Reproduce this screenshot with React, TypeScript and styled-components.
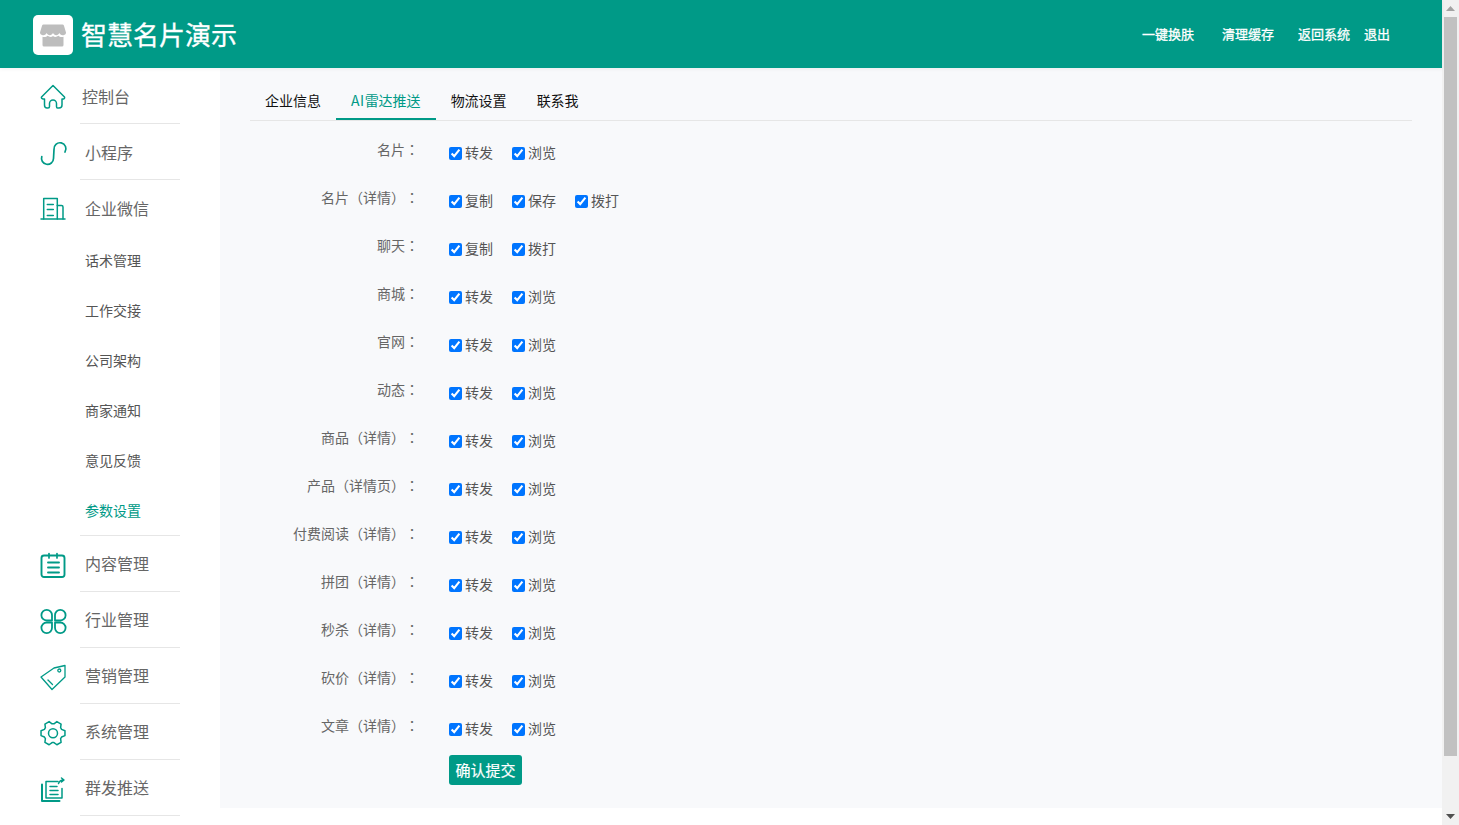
import React from "react";
import styled, { createGlobalStyle } from "styled-components";

const TEAL = "#009a87";

const Global = createGlobalStyle`
  html, body { margin: 0; padding: 0; height: 100%; overflow: hidden; background: #fff; }
  body { font-family: "Noto Sans CJK SC", "Liberation Sans", sans-serif; text-spacing-trim: space-all; }
  * { box-sizing: border-box; }
`;

const Shell = styled.div`
  display: flex;
  width: 1459px;
  height: 825px;
  overflow: hidden;
`;
const Page = styled.div`
  width: 1442px;
  display: flex;
  flex-direction: column;
`;
const Header = styled.header`
  height: 68px;
  flex: none;
  background: ${TEAL};
  display: flex;
  align-items: center;
  padding: 0 52px 0 33px;
  position: relative;
  z-index: 1;
  box-shadow: 0 1px 4px rgba(0, 0, 0, 0.06);
`;
const LogoBox = styled.div`
  width: 40px;
  height: 40px;
  margin-top: 2px;
  background: #fff;
  border-radius: 5px;
  display: flex;
  align-items: center;
  justify-content: center;
`;
const Title = styled.h1`
  margin: 0 0 0 8px;
  font-size: 26px;
  line-height: 40px;
  font-weight: 400;
  color: #fff;
  -webkit-text-stroke: 0.3px #fff;
`;
const HeaderNav = styled.nav`
  margin-left: auto;
  display: flex;
  align-items: center;
  padding-bottom: 2px;
`;
const HeaderLink = styled.a<{ $gap: number }>`
  font-size: 13px;
  color: #fff;
  margin-left: ${(p) => p.$gap}px;
  -webkit-text-stroke: 0.3px #fff;
`;
const Body = styled.div`
  flex: 1;
  display: flex;
  min-height: 0;
`;
const Sidebar = styled.aside`
  width: 220px;
  flex: none;
  background: #fff;
  overflow: hidden;
`;
const MenuItem = styled.div`
  height: 55px;
  display: flex;
  align-items: center;
  padding-left: 40px;
`;
const MenuIcon = styled.svg`
  width: 26px;
  height: 26px;
  flex: none;
  fill: none;
  overflow: visible;
  stroke: ${TEAL};
  stroke-width: 1.5;
  stroke-linecap: round;
  stroke-linejoin: round;
`;
const MenuLabel = styled.span<{ $tight?: boolean; $raised?: boolean }>`
  margin-left: ${(p) => (p.$tight ? 16 : 19)}px;
  padding-bottom: ${(p) => (p.$raised ? 2 : 0)}px;
  font-size: 16px;
  color: #666;
`;
const Divider = styled.div`
  width: 100px;
  height: 1px;
  margin-left: 80px;
  background: #e6e6e6;
`;
const SubItem = styled.div<{ $active?: boolean }>`
  height: 50px;
  display: flex;
  align-items: center;
  padding-left: 85px;
  font-size: 14px;
  color: ${(p) => (p.$active ? TEAL : "#555")};
`;
const MainColumn = styled.div`
  flex: 1;
  display: flex;
  flex-direction: column;
`;
const Content = styled.main`
  height: 740px;
  background: #f8f9fb;
  padding: 14px 30px 0;
`;
const Tabs = styled.div`
  display: flex;
  height: 39px;
  border-bottom: 1px solid #e6e6e6;
`;
const Tab = styled.div<{ $active?: boolean }>`
  height: 38px;
  padding: 0 15px;
  font-size: 14px;
  line-height: 36px;
  color: ${(p) => (p.$active ? TEAL : "#111")};
  border-bottom: 2px solid ${(p) => (p.$active ? TEAL : "transparent")};
`;
const TabLatin = styled.span`
  letter-spacing: 0.5px;
`;
const Form = styled.form`
  margin-top: 8px;
`;
const Row = styled.div`
  height: 48px;
  display: flex;
  align-items: center;
`;
const RowLabel = styled.div`
  width: 169px;
  margin-right: 30px;
  padding-bottom: 8px;
  text-align: right;
  font-size: 14px;
  color: #666;
`;
const Punct = styled.span`
  font-family: "Noto Sans CJK TC", sans-serif;
`;
const CheckLabel = styled.label`
  display: flex;
  align-items: center;
  margin-right: 19px;
  font-size: 14px;
  color: #555;
`;
const CheckText = styled.span`
  padding-bottom: 2px;
`;
const Check = styled.input`
  width: 13px;
  height: 13px;
  margin: 0 3px 0 0;
  accent-color: #0075ff;
`;
const Submit = styled.button`
  display: block;
  width: 73px;
  height: 30px;
  margin: 2px 0 0 199px;
  padding: 0 0 2px;
  border: 0;
  border-radius: 3px;
  background: ${TEAL};
  color: #fff;
  font: 400 15px "Noto Sans CJK SC", sans-serif;
  -webkit-text-stroke: 0.2px #fff;
`;
const Scrollbar = styled.div`
  width: 17px;
  flex: none;
  background: #f1f1f1;
  display: flex;
  flex-direction: column;
  align-items: center;
`;
const ScrollArrow = styled.div`
  height: 17px;
  flex: none;
  display: flex;
  align-items: center;
  justify-content: center;
`;
const ScrollThumb = styled.div`
  width: 13px;
  height: 739px;
  background: #c1c1c1;
`;
const ScrollSpacer = styled.div`
  flex: 1;
`;

const gearPath = (() => {
  const cx = 13;
  const cy = 14.2;
  const R = 12.2;
  const r = 9.4;
  const pts: string[] = [];
  for (let k = 0; k < 6; k++) {
    const a = (k * Math.PI) / 3;
    const pt = (rad: number, off: number) =>
      `${(cx + rad * Math.cos(a + off)).toFixed(2)} ${(cy + rad * Math.sin(a + off)).toFixed(2)}`;
    pts.push(pt(r, -0.42), pt(R, -0.2), pt(R, 0.2), pt(r, 0.42));
  }
  return `M${pts.join("L")}Z`;
})();

const icons: Record<string, React.ReactNode> = {
  home: (
    <path d="M13 2.500 24.500 14Q25 15.500 23.500 16H22V22Q22 25 19 25H17.500Q16.500 25 16.500 23.500V20.500A3.500 3.500 0 0 0 9.500 20.500V23.500Q9.500 25 8 25H7Q4.500 25 4.500 22V16H3Q1 15.500 1.500 14Z" />
  ),
  mini: <path d="M1.800 17.500A6 6 0 1 0 13.500 19.500L14 10.500A6 6 0 1 1 25 13" strokeWidth="1.700" />,
  building: (
    <>
      <path d="M3.700 24V3.500H17.300V24" />
      <path d="M17.300 10.500H21.500Q23 10.500 23 12V24" />
      <path d="M1 24H25" />
      <path d="M7.300 9.500H13.300M7.300 14.500H13.300M7.300 20.500H13.300" />
    </>
  ),
  notes: (
    <>
      <rect x="1.500" y="4.500" width="23" height="21.500" rx="2.500" strokeWidth="1.900" />
      <path d="M9 2.500V7M17 2.500V7" strokeWidth="1.700" />
      <path d="M8 11.500H19M8 16.500H19M8 21.500H19" strokeWidth="1.900" />
    </>
  ),
  clover: (
    <g strokeWidth="1.800">
      <path d="M12 13.500H6.700A5.300 5.300 0 1 1 12 8.200Z" />
      <path d="M15 13.500H20.300A5.300 5.300 0 1 0 15 8.200Z" />
      <path d="M12 15.500H6.700A5.300 5.300 0 1 0 12 20.800Z" />
      <path d="M15 15.500H20.300A5.300 5.300 0 1 1 15 20.800Z" />
    </g>
  ),
  tag: (
    <g strokeWidth="1.300">
      <path d="M1 14 14 5 25 2.500V14L12 26.500Z" />
      <circle cx="19.300" cy="7.500" r="1.500" />
      <path d="M8 17 12.500 21.500" />
    </g>
  ),
  gear: (
    <>
      <path d={gearPath} />
      <circle cx="13" cy="14.200" r="4.500" />
    </>
  ),
  send: (
    <>
      <path d="M6 6.500H18M6 6.500V23H22V13.500" />
      <path d="M2 9.500V26H19.500" strokeWidth="2" />
      <path d="M10 11.500H17M10 15.500H18M10 19.500H18" />
      <path d="M18.500 8.500C19.300 6.300 21 5 23.500 5M21.500 3 24 5 21.500 7" />
    </>
  ),
};

const Icon = ({ name }: { name: string }) => <MenuIcon viewBox="0 0 26 26">{icons[name]}</MenuIcon>;

const LabelText = ({ text }: { text: string }) => (
  <>
    {text.split(/([（）：])/).map((part, i) => (i % 2 ? <Punct key={i}>{part}</Punct> : part))}
  </>
);

const rows: { label: string; checks: string[] }[] = [
  { label: "名片：", checks: ["转发", "浏览"] },
  { label: "名片（详情）：", checks: ["复制", "保存", "拨打"] },
  { label: "聊天：", checks: ["复制", "拨打"] },
  { label: "商城：", checks: ["转发", "浏览"] },
  { label: "官网：", checks: ["转发", "浏览"] },
  { label: "动态：", checks: ["转发", "浏览"] },
  { label: "商品（详情）：", checks: ["转发", "浏览"] },
  { label: "产品（详情页）：", checks: ["转发", "浏览"] },
  { label: "付费阅读（详情）：", checks: ["转发", "浏览"] },
  { label: "拼团（详情）：", checks: ["转发", "浏览"] },
  { label: "秒杀（详情）：", checks: ["转发", "浏览"] },
  { label: "砍价（详情）：", checks: ["转发", "浏览"] },
  { label: "文章（详情）：", checks: ["转发", "浏览"] },
];

const subItems = ["话术管理", "工作交接", "公司架构", "商家通知", "意见反馈", "参数设置"];
const lowerMenu = [
  ["notes", "内容管理"],
  ["clover", "行业管理"],
  ["tag", "营销管理"],
  ["gear", "系统管理"],
  ["send", "群发推送"],
];

export default function App() {
  return (
    <Shell>
      <Global />
      <Page>
        <Header>
          <LogoBox>
            <svg width="28" height="28" viewBox="0 0 28 28" fill="#bdbdbd">
              <path d="M4.500 3.500h19a1.500 1.500 0 0 1 1.400 1L27 11.500c0 2.600-2.500 2.800-3.400 2.800-1.600 0-2.800-1.300-3.200-2.200-.5 1-1.800 2.200-3.200 2.200s-2.600-1.200-3.200-2.200c-.6 1-1.800 2.200-3.200 2.200s-2.700-1.200-3.200-2.200c-.4.900-1.600 2.200-3.200 2.200C4 14.300 1 14 1 11.500l2.100-7a1.500 1.500 0 0 1 1.400-1z" />
              <path d="M3.500 15.800c1.800.5 4 .2 5.200-1 1.400 1.400 3.900 1.500 5.300.2 1.400 1.300 3.900 1.200 5.300-.2 1.200 1.200 3.400 1.500 5.200 1V24a1.500 1.500 0 0 1-1.500 1.500H5A1.500 1.500 0 0 1 3.500 24z" />
            </svg>
          </LogoBox>
          <Title>智慧名片演示</Title>
          <HeaderNav>
            <HeaderLink $gap={0}>一键换肤</HeaderLink>
            <HeaderLink $gap={28}>清理缓存</HeaderLink>
            <HeaderLink $gap={24}>返回系统</HeaderLink>
            <HeaderLink $gap={14}>退出</HeaderLink>
          </HeaderNav>
        </Header>
        <Body>
          <Sidebar>
            <MenuItem>
              <Icon name="home" />
              <MenuLabel $tight>控制台</MenuLabel>
            </MenuItem>
            <Divider />
            <MenuItem>
              <Icon name="mini" />
              <MenuLabel>小程序</MenuLabel>
            </MenuItem>
            <Divider />
            <MenuItem>
              <Icon name="building" />
              <MenuLabel>企业微信</MenuLabel>
            </MenuItem>
            {subItems.map((s) => (
              <SubItem key={s} $active={s === "参数设置"}>
                {s}
              </SubItem>
            ))}
            <Divider />
            {lowerMenu.map(([icon, label]) => (
              <React.Fragment key={label}>
                <MenuItem>
                  <Icon name={icon} />
                  <MenuLabel $raised>{label}</MenuLabel>
                </MenuItem>
                <Divider />
              </React.Fragment>
            ))}
          </Sidebar>
          <MainColumn>
            <Content>
              <Tabs>
                <Tab>企业信息</Tab>
                <Tab $active>
                  <TabLatin>AI</TabLatin>雷达推送
                </Tab>
                <Tab>物流设置</Tab>
                <Tab>联系我</Tab>
              </Tabs>
              <Form onSubmit={(e) => e.preventDefault()}>
                {rows.map((r, i) => (
                  <Row key={i}>
                    <RowLabel>
                      <LabelText text={r.label} />
                    </RowLabel>
                    {r.checks.map((c) => (
                      <CheckLabel key={c}>
                        <Check type="checkbox" defaultChecked />
                        <CheckText>{c}</CheckText>
                      </CheckLabel>
                    ))}
                  </Row>
                ))}
                <Submit type="submit">确认提交</Submit>
              </Form>
            </Content>
          </MainColumn>
        </Body>
      </Page>
      <Scrollbar>
        <ScrollArrow>
          <svg width="9" height="5" viewBox="0 0 9 5" fill="#a3a3a3">
            <path d="M4.500 0 9 5H0z" />
          </svg>
        </ScrollArrow>
        <ScrollThumb />
        <ScrollSpacer />
        <ScrollArrow>
          <svg width="9" height="5" viewBox="0 0 9 5" fill="#505050">
            <path d="M0 0h9L4.500 5z" />
          </svg>
        </ScrollArrow>
      </Scrollbar>
    </Shell>
  );
}
